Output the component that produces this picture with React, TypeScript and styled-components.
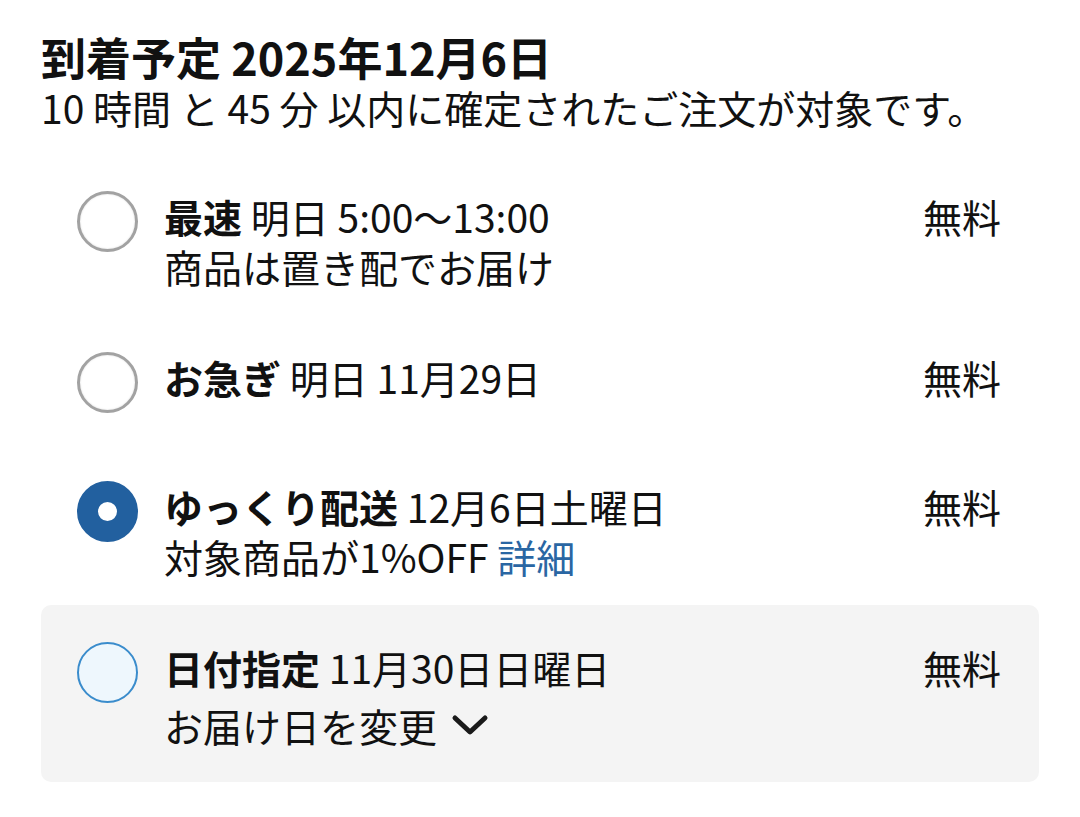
import styled, { createGlobalStyle } from "styled-components";

const GlobalStyle = createGlobalStyle`
  body {
    margin: 0;
    background: #ffffff;
    color: #111111;
    font-family: "Noto Sans CJK JP", "Noto Sans", sans-serif;
  }
`;

type Kind = "off" | "on" | "focus";

const options = [
  { label: "最速", date: "明日 5:00〜13:00", sub: "商品は置き配でお届け", kind: "off" as Kind, pad: "0 38px 61px 36px" },
  { label: "お急ぎ", date: "明日 11月29日", sub: "", kind: "off" as Kind, pad: "0 38px 68px 36px" },
  { label: "ゆっくり配送", date: "12月6日土曜日", sub: "discount", kind: "on" as Kind, pad: "0 38px 24px 36px" },
];

function App() {
  return (
    <Page>
      <GlobalStyle />
      <Title>到着予定 2025年12月6日</Title>
      <Note>10 時間 と 45 分 以内に確定されたご注文が対象です。</Note>
      <List>
        {options.map((o) => (
          <Option key={o.label} $pad={o.pad}>
            <Radio $kind={o.kind} />
            <Body>
              <Line>
                <b>{o.label}</b> {o.date}
              </Line>
              {o.sub === "discount" ? (
                <Line>
                  対象商品が1%OFF <Link>詳細</Link>
                </Line>
              ) : o.sub ? (
                <Line>{o.sub}</Line>
              ) : null}
            </Body>
            <Price>無料</Price>
          </Option>
        ))}
        <Picked>
          <Radio $kind="focus" />
          <Body>
            <Line>
              <b>日付指定</b> 11月30日日曜日
            </Line>
            <ChangeLine>
              お届け日を変更
              <svg width="38" height="26" viewBox="0 0 38 26">
                <path d="M4 6 L19 20 L34 6" fill="none" stroke="#1a1a1a" strokeWidth="5" strokeLinecap="round" strokeLinejoin="round" />
              </svg>
            </ChangeLine>
          </Body>
          <Price>無料</Price>
        </Picked>
      </List>
    </Page>
  );
}

export default App;

const Page = styled.div`
  padding: 32px 41px 0 41px;
`;

const Title = styled.h1`
  margin: 0;
  font-size: 45px;
  font-weight: 700;
  line-height: 50px;
`;

const Note = styled.div`
  font-size: 39px;
  line-height: 50px;
`;

const List = styled.div`
  display: flex;
  flex-direction: column;
  margin-top: 59px;
`;

const Option = styled.div<{ $pad: string }>`
  display: flex;
  align-items: flex-start;
  padding: ${(p) => p.$pad};
`;

const Picked = styled.div`
  display: flex;
  align-items: flex-start;
  padding: 37px 38px 32px 36px;
  background: #f4f4f4;
  border-radius: 10px;
`;

const Radio = styled.span<{ $kind: Kind }>`
  flex: none;
  box-sizing: border-box;
  width: 61px;
  height: 61px;
  margin-top: 0;
  margin-right: 26px;
  border-radius: 50%;
  border: ${(p) =>
    p.$kind === "on" ? "21px solid #22609f" : p.$kind === "focus" ? "2.5px solid #3a8ccc" : "3px solid #a2a2a2"};
  background: ${(p) => (p.$kind === "on" ? "#ffffff" : p.$kind === "focus" ? "#eef7fd" : "#ffffff")};
  box-shadow: ${(p) => (p.$kind === "off" ? "inset 0 0 2px rgba(0,0,0,0.15)" : "none")};
`;

const Body = styled.div`
  flex: 1;
  display: flex;
  flex-direction: column;
`;

const Line = styled.div`
  font-size: 39px;
  line-height: 50px;
  white-space: nowrap;

  b {
    font-weight: 700;
  }
`;

const ChangeLine = styled(Line)`
  display: flex;
  align-items: center;
  gap: 14px;
  margin-top: 8px;
`;

const Link = styled.span`
  color: #2a66a3;
`;

const Price = styled.div`
  font-size: 39px;
  line-height: 50px;
`;
